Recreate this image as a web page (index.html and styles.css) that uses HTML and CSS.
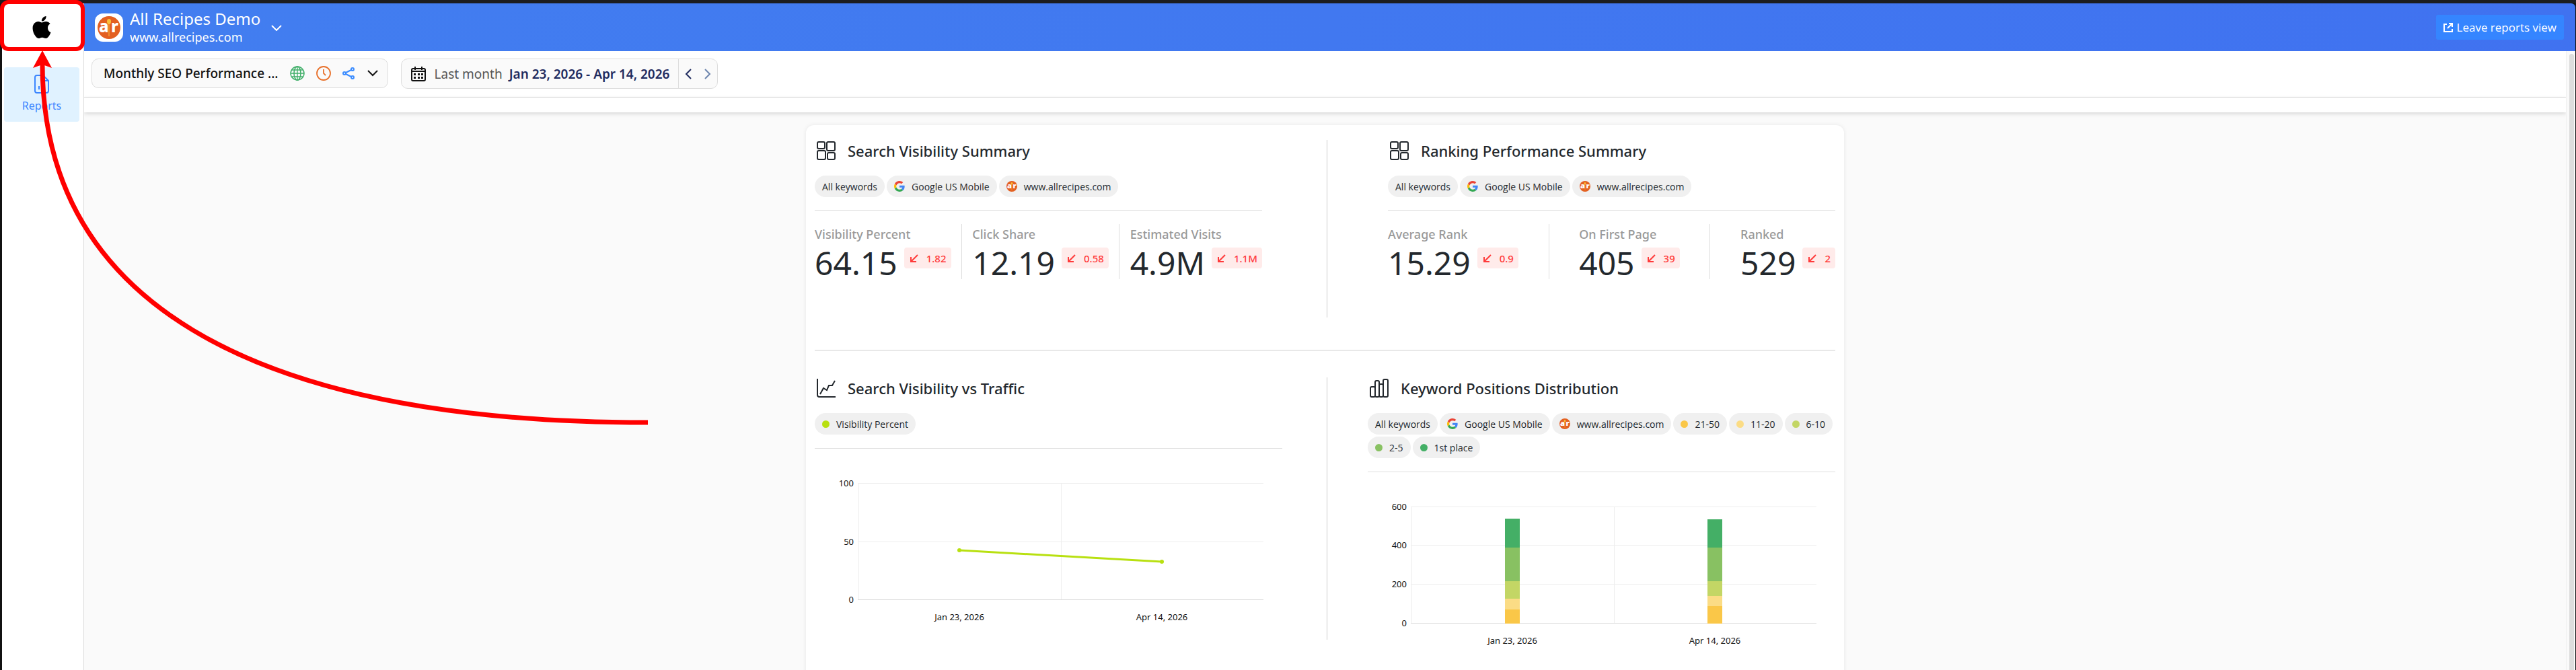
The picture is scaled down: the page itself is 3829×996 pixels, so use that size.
FILE: index.html
```html
<!DOCTYPE html>
<html lang="en">
<head>
  <meta charset="UTF-8" />
  <meta name="viewport" content="width=device-width, initial-scale=1.0"/>
  <title>All Recipes Demo - Reports</title>
  <link rel="stylesheet" href="styles.css">
</head>
<body>
  <!-- shared icons -->
  <svg class="sprite" aria-hidden="true">
    <symbol id="google" viewBox="0 0 48 48">
      <path fill="#ea4335" d="M24 9.5c3.5 0 6.7 1.2 9.2 3.6l6.9-6.9C35.9 2.4 30.5 0 24 0 14.6 0 6.5 5.4 2.6 13.2l8 6.2C12.4 13.7 17.7 9.5 24 9.5z"/>
      <path fill="#4285f4" d="M47 24.6c0-1.6-.2-3.1-.4-4.6H24v9h12.9c-.6 3-2.2 5.5-4.8 7.2l7.7 6C44.4 38 47 31.8 47 24.6z"/>
      <path fill="#fbbc05" d="M10.5 28.6c-.5-1.5-.8-3-.8-4.6s.3-3.1.8-4.6l-8-6.2C.9 16.5 0 20.1 0 24s.9 7.5 2.6 10.8l7.9-6.2z"/>
      <path fill="#34a853" d="M24 48c6.5 0 11.9-2.1 15.9-5.8l-7.7-6c-2.2 1.5-4.9 2.3-8.2 2.3-6.3 0-11.6-4.2-13.5-9.900l-8 6.200C6.500 42.600 14.600 48 24 48z"/>
    </symbol>
    <symbol id="allrecipes" viewBox="0 0 34 34">
      <circle cx="17" cy="17" r="17" fill="#e35f20"/>
      <text class="ar" x="2" y="24">a</text>
      <text class="ar" x="20" y="24">r</text>
      <ellipse cx="17" cy="8" rx="3" ry="4" fill="#f9bf3b"/>
      <path d="M17 8v22" stroke="#f9bf3b" stroke-width="1"/>
    </symbol>
    <symbol id="tiles" viewBox="0 0 28 28">
      <g fill="none" stroke="#23282d" stroke-width="2">
        <rect x="1" y="1" width="11" height="10" rx="2"/>
        <rect x="15" y="1" width="12" height="13" rx="2"/>
        <rect x="1" y="14" width="12" height="13" rx="2"/>
        <rect x="16" y="17" width="11" height="10" rx="2"/>
      </g>
    </symbol>
    <symbol id="down" viewBox="0 0 12 12">
      <path d="M11 1L2 10M1 4v7h8" fill="none" stroke="#ff3b3b" stroke-width="2"/>
    </symbol>
  </svg>

  <div class="app">
    <aside class="sidebar">
      <a href="#" class="brand" aria-label="Home">
        <svg width="28" height="33" viewBox="0 0 814 1000"><path d="M788 341c-6 4-108 62-108 190 0 148 130 201 134 202-1 3-21 72-69 142-42 62-87 123-155 123s-85-39-163-39c-76 0-103 41-165 41s-105-57-155-127C49 791 0 664 0 542c0-194 127-297 251-297 66 0 121 43 162 43 40 0 101-46 176-46 29 0 131 3 199 99zM554 159c31-37 53-88 53-139 0-7-1-14-2-20-50 2-110 34-147 76-28 32-55 83-55 135 0 8 1 16 2 18 3 1 8 1 13 1 46 0 103-30 136-71z"/></svg>
      </a>
      <a href="#" class="nav-item">
        <svg width="22" height="28" viewBox="0 0 22 28" fill="none" stroke="#3b86ff" stroke-width="2"><path d="M13 1H4a3 3 0 0 0-3 3v20a3 3 0 0 0 3 3h14a3 3 0 0 0 3-3V9zM13 1v8h8M7 22v-5M11 22v-3M15 22v-8"/></svg>
        <span>Reports</span>
      </a>
    </aside>

    <div class="main">
      <header class="topbar">
        <div class="site-logo"><svg width="34" height="34"><use href="#allrecipes"/></svg></div>
        <div class="site">
          <div class="site-name">All Recipes Demo</div>
          <div class="site-url">www.allrecipes.com</div>
        </div>
        <button class="icon-btn" aria-label="Switch site">
          <svg width="16" height="9" viewBox="0 0 16 9" fill="none" stroke="#fff" stroke-width="2"><path d="M1 1l7 7 7-7"/></svg>
        </button>
        <button class="leave">
          <svg width="14" height="14" viewBox="0 0 14 14" fill="none" stroke="#fff" stroke-width="2"><path d="M5 2H1v11h12V9M8 1h5v5M13 1L6 8"/></svg>
          Leave reports view
        </button>
      </header>

      <div class="scroller">
        <div class="page">
          <div class="toolbar">
            <button class="picker report-picker">
              <span class="report-name">Monthly SEO Performance ...</span>
              <svg width="22" height="22" viewBox="0 0 22 22" fill="none" stroke="#3fae68"><circle cx="11" cy="11" r="10" stroke-width="1.5"/><ellipse cx="11" cy="11" rx="5" ry="10" stroke-width="1.5"/><path d="M11 1v20M1 11h20M3 6h16M3 16h16" stroke-width="1.3"/></svg>
              <svg width="22" height="22" viewBox="0 0 22 22" fill="none" stroke="#e8702a" stroke-width="1.8"><circle cx="11" cy="11" r="10"/><path d="M11 5v6l3 3"/></svg>
              <svg width="18" height="20" viewBox="0 0 18 20" fill="none" stroke="#3b8cff" stroke-width="2"><circle cx="3" cy="10" r="2"/><circle cx="15" cy="4" r="2"/><circle cx="15" cy="16" r="2"/><path d="M5 9l8-4M5 11l8 4"/></svg>
              <svg class="caret" width="16" height="10" viewBox="0 0 16 10" fill="none" stroke="#111" stroke-width="2"><path d="M1 1l7 7 7-7"/></svg>
            </button>
            <div class="picker date-picker">
              <button class="range">
                <svg width="22" height="22" viewBox="0 0 22 22"><path d="M1 8V5a2 2 0 0 1 2-2h16a2 2 0 0 1 2 2v14a2 2 0 0 1-2 2H3a2 2 0 0 1-2-2zM1 7h20M6 0v5M16 0v5" fill="none" stroke="#111" stroke-width="2"/><path d="M4 10h3v3H4zM10 10h3v3h-3zM15 10h3v3h-3zM4 15h3v3H4zM10 15h3v3h-3zM15 15h3v3h-3z" fill="#111"/></svg>
                <span class="preset">Last month</span>
                <span class="dates">Jan 23, 2026 - Apr 14, 2026</span>
              </button>
              <button class="step first" aria-label="Previous period">
                <svg width="10" height="16" viewBox="0 0 10 16" fill="none" stroke="#1e2a5e" stroke-width="2"><path d="M9 1L2 8l7 7"/></svg>
              </button>
              <button class="step" aria-label="Next period">
                <svg width="10" height="16" viewBox="0 0 10 16" fill="none" stroke="#6c84ad" stroke-width="2"><path d="M1 1l7 7-7 7"/></svg>
              </button>
            </div>
          </div>
          <div class="subbar"></div>

          <main class="report">
            <div class="row">
              <section class="panel">
                <h2><svg width="28" height="28"><use href="#tiles"/></svg>Search Visibility Summary</h2>
                <div class="chips">
                  <span class="chip">All keywords</span>
                  <span class="chip"><svg width="16" height="16"><use href="#google"/></svg>Google US Mobile</span>
                  <span class="chip"><svg width="16" height="16"><use href="#allrecipes"/></svg>www.allrecipes.com</span>
                </div>
                <div class="metrics">
                  <div class="metric">
                    <div class="label">Visibility Percent</div>
                    <div class="value">64.15 <span class="change"><svg width="12" height="12"><use href="#down"/></svg>1.82</span></div>
                  </div>
                  <div class="bar"></div>
                  <div class="metric">
                    <div class="label">Click Share</div>
                    <div class="value">12.19 <span class="change"><svg width="12" height="12"><use href="#down"/></svg>0.58</span></div>
                  </div>
                  <div class="bar"></div>
                  <div class="metric">
                    <div class="label">Estimated Visits</div>
                    <div class="value">4.9M <span class="change"><svg width="12" height="12"><use href="#down"/></svg>1.1M</span></div>
                  </div>
                </div>
              </section>
              <section class="panel">
                <h2><svg width="28" height="28"><use href="#tiles"/></svg>Ranking Performance Summary</h2>
                <div class="chips">
                  <span class="chip">All keywords</span>
                  <span class="chip"><svg width="16" height="16"><use href="#google"/></svg>Google US Mobile</span>
                  <span class="chip"><svg width="16" height="16"><use href="#allrecipes"/></svg>www.allrecipes.com</span>
                </div>
                <div class="metrics">
                  <div class="metric">
                    <div class="label">Average Rank</div>
                    <div class="value">15.29 <span class="change"><svg width="12" height="12"><use href="#down"/></svg>0.9</span></div>
                  </div>
                  <div class="bar"></div>
                  <div class="metric">
                    <div class="label">On First Page</div>
                    <div class="value">405 <span class="change"><svg width="12" height="12"><use href="#down"/></svg>39</span></div>
                  </div>
                  <div class="bar"></div>
                  <div class="metric">
                    <div class="label">Ranked</div>
                    <div class="value">529 <span class="change"><svg width="12" height="12"><use href="#down"/></svg>2</span></div>
                  </div>
                </div>
              </section>
            </div>

            <div class="row charts">
              <section class="panel">
                <h2><svg width="28" height="28" viewBox="0 0 28 28" fill="none" stroke="#23282d" stroke-width="2"><path d="M1 0v24a3 3 0 0 0 3 3h24M5 23l5-9 5 3 3-7h5l4-7"/></svg>Search Visibility vs Traffic</h2>
                <div class="chips">
                  <span class="chip"><i class="dot lime"></i>Visibility Percent</span>
                </div>
                <svg class="chart" viewBox="0 0 695 240">
                  <path class="grid" d="M64 22h603M64 109h603M65 22v173M366 22v173"/>
                  <path class="axis" d="M64 195h603"/>
                  <g class="y">
                    <text x="58" y="27">100</text>
                    <text x="58" y="114">50</text>
                    <text x="58" y="200">0</text>
                  </g>
                  <g class="x">
                    <text x="215" y="226">Jan 23, 2026</text>
                    <text x="516" y="226">Apr 14, 2026</text>
                  </g>
                  <path d="M215 122L516 139" stroke="#b8e010" stroke-width="3"/>
                  <circle cx="215" cy="122" r="3" fill="#b8e010"/>
                  <circle cx="516" cy="139" r="3" fill="#b8e010"/>
                </svg>
              </section>
              <section class="panel">
                <h2><svg width="28" height="28" viewBox="0 0 28 28" fill="none" stroke="#23282d" stroke-width="2"><rect x="1" y="12" width="7" height="15" rx="2"/><rect x="8" y="3" width="6" height="24" rx="2"/><rect x="14" y="8" width="6" height="19" rx="2"/><rect x="20" y="1" width="7" height="26" rx="2"/></svg>Keyword Positions Distribution</h2>
                <div class="chips">
                  <span class="chip">All keywords</span>
                  <span class="chip"><svg width="16" height="16"><use href="#google"/></svg>Google US Mobile</span>
                  <span class="chip"><svg width="16" height="16"><use href="#allrecipes"/></svg>www.allrecipes.com</span>
                  <span class="chip"><i class="dot orange"></i>21-50</span>
                  <span class="chip"><i class="dot yellow"></i>11-20</span>
                  <span class="chip"><i class="dot olive"></i>6-10</span>
                  <span class="chip"><i class="dot green"></i>2-5</span>
                  <span class="chip"><i class="dot dark"></i>1st place</span>
                </div>
                <svg class="chart" viewBox="0 0 695 240">
                  <path class="grid" d="M64 22h603M64 79h603M64 137h603M65 22v173M366 22v173"/>
                  <path class="axis" d="M64 195h603"/>
                  <g class="y">
                    <text x="58" y="27">600</text>
                    <text x="58" y="84">400</text>
                    <text x="58" y="142">200</text>
                    <text x="58" y="200">0</text>
                  </g>
                  <g class="x">
                    <text x="215" y="226">Jan 23, 2026</text>
                    <text x="516" y="226">Apr 14, 2026</text>
                  </g>
                  <g fill="#44af66"><rect x="204" y="40" width="22" height="43"/><rect x="505" y="41" width="22" height="42"/></g>
                  <g fill="#88c162"><rect x="204" y="83" width="22" height="50"/><rect x="505" y="83" width="22" height="50"/></g>
                  <g fill="#c3d665"><rect x="204" y="133" width="22" height="26"/><rect x="505" y="133" width="22" height="22"/></g>
                  <g fill="#fbdc85"><rect x="204" y="159" width="22" height="16"/><rect x="505" y="155" width="22" height="15"/></g>
                  <g fill="#fac748"><rect x="204" y="175" width="22" height="21"/><rect x="505" y="170" width="22" height="26"/></g>
                </svg>
              </section>
            </div>
          </main>
        </div>
        <div class="scrollbar"><div class="thumb"></div></div>
      </div>
    </div>
  </div>

  <!-- callout pointing at the brand logo -->
  <svg class="callout" width="980" height="640" aria-hidden="true">
    <rect x="3" y="3" width="120" height="70" rx="10" fill="none" stroke="#f00" stroke-width="6"/>
    <path d="M63 95C63 440 360 628 963 628" fill="none" stroke="#f00" stroke-width="7"/>
    <path d="M63 75l14 26-14-5-14 5z" fill="#f00"/>
  </svg>
</body>
</html>
```
FILE: styles.css
```css
* {
  box-sizing: border-box;
}

body {
  margin: 0;
  font-family: 'Noto Sans', 'Open Sans', sans-serif;
  font-size: 16px;
  color: #23282d;
  background-color: #111;
}

button {
  font-family: inherit;
  border: none;
  background: none;
  padding: 0;
  cursor: pointer;
}

a {
  text-decoration: none;
}

.sprite {
  display: none;
}

.ar {
  font-size: 24px;
  font-weight: 800;
  fill: #fff;
}

.app {
  display: flex;
  height: 100vh;
  padding-left: 3px;
  padding-right: 1px;
  border-top: 5px solid #1c1d20;
  overflow: hidden;
}

/* sidebar */
.sidebar {
  width: 122px;
  flex-shrink: 0;
  background-color: #fff;
  border-right: 1px solid #ddd;
}

.brand {
  display: flex;
  align-items: center;
  justify-content: center;
  height: 71px;
  padding-right: 4px;
}

.nav-item {
  display: flex;
  flex-direction: column;
  align-items: center;
  gap: 6px;
  height: 81px;
  margin: 24px 6px 0 3px;
  padding-top: 11px;
  border-radius: 4px;
  background-color: #e0f2ff;
  color: #3b86ff;
  line-height: 24px;
}

/* header */
.main {
  flex: 1;
  min-width: 0;
  display: flex;
  flex-direction: column;
}

.topbar {
  display: flex;
  align-items: center;
  height: 71px;
  flex-shrink: 0;
  padding: 0 17px 0 16px;
  background: linear-gradient(90deg, #427ef0, #4072f0);
  border-top-right-radius: 6px;
  color: #fff;
}

.site-logo {
  display: flex;
  align-items: center;
  justify-content: center;
  width: 42px;
  height: 42px;
  margin-right: 10px;
  border-radius: 12px;
  background-color: #fff;
}

.site {
  padding-bottom: 1px;
}

.site-name {
  font-size: 24px;
  line-height: 30px;
}

.site-url {
  font-size: 18px;
  line-height: 24px;
}

.icon-btn {
  margin-left: 16px;
}

.leave {
  display: flex;
  align-items: center;
  gap: 6px;
  height: 37px;
  margin-left: auto;
  padding: 0 11px;
  border-radius: 3px;
  background-color: #3585ff;
  color: #fff;
  font-family: 'Open Sans', sans-serif;
  font-size: 17px;
}

/* page */
.scroller {
  flex: 1;
  min-height: 0;
  display: flex;
  background-color: #fafafa;
}

.page {
  flex: 1;
  overflow: hidden;
}

.scrollbar {
  width: 14px;
  padding: 4px 2px 0 4px;
  border-left: 1px solid #eee;
}

.thumb {
  height: 100%;
  border-radius: 4px 4px 0 0;
  background-color: #ddd;
}

.toolbar {
  display: flex;
  align-items: flex-start;
  gap: 19px;
  height: 69px;
  padding: 11px;
  background-color: #fff;
  border-bottom: 1px solid #ddd;
}

.subbar {
  height: 22px;
  background-color: #fff;
  box-shadow: 0 2px 6px rgba(0, 0, 0, 0.15);
}

.picker {
  display: flex;
  align-items: center;
  height: 45px;
  border: 1px solid #ddd;
  border-radius: 10px;
  background-color: #fafafa;
}

.report-picker {
  gap: 17px;
  height: 44px;
  padding: 0 14px 0 17px;
  font-size: 19px;
  font-weight: 500;
  color: #111;
}

.caret {
  margin-left: 2px;
}

.date-picker {
  font-size: 19px;
}

.range {
  display: flex;
  align-items: center;
  padding: 0 13px 0 14px;
  font-size: inherit;
}

.preset {
  margin: 0 10px 0 13px;
  color: #555;
}

.dates {
  font-weight: 600;
  color: #1e2a5e;
}

.step {
  display: flex;
  align-items: center;
  justify-content: center;
  width: 29px;
  height: 100%;
}

.step.first {
  border-left: 1px solid #ddd;
}

/* report */
.report {
  width: 1543px;
  max-width: 100%;
  margin: 19px auto 0;
  padding: 0 13px;
  border-radius: 12px;
  background-color: #fff;
  box-shadow: 0 0 6px rgba(0, 0, 0, 0.08);
}

.row {
  display: flex;
  justify-content: space-between;
  position: relative;
  height: 335px;
  padding-top: 22px;
  border-bottom: 1px solid #ccc;
}

/* rule between the two panels */
.row::before {
  content: "";
  position: absolute;
  left: 50%;
  top: 22px;
  bottom: 48px;
  margin-left: 2px;
  width: 1px;
  background-color: #ccc;
}

.row.charts {
  height: 520px;
  padding-top: 40px;
  border-bottom: none;
}

.row.charts::before {
  top: 40px;
  bottom: 90px;
}

.panel {
  width: 665px;
}

.charts .panel {
  width: 695px;
}

h2 {
  display: flex;
  align-items: center;
  gap: 18px;
  height: 32px;
  margin: 0 0 21px;
  padding-left: 3px;
  font-size: 22px;
  font-weight: 500;
}

.chips {
  display: flex;
  flex-wrap: wrap;
  gap: 3px;
  padding-bottom: 19px;
  border-bottom: 1px solid #ddd;
}

.charts .chips {
  padding-bottom: 20px;
}

.chip {
  display: flex;
  align-items: center;
  gap: 10px;
  height: 32px;
  padding: 0 11px;
  border-radius: 16px;
  background-color: #f0f0f0;
  font-family: 'Open Sans', sans-serif;
  font-size: 14px;
}

.dot {
  width: 11px;
  height: 11px;
  border-radius: 50%;
}

.lime { background-color: #b8e010; }
.orange { background-color: #fac748; }
.yellow { background-color: #fbdc85; }
.olive { background-color: #c3d665; }
.green { background-color: #88c162; }
.dark { background-color: #44af66; }

.metrics {
  display: flex;
  justify-content: space-between;
  margin-top: 20px;
}

.metric {
  padding-top: 3px;
}

.bar {
  width: 1px;
  height: 82px;
  background-color: #ddd;
}

.label {
  font-size: 18px;
  font-weight: 500;
  line-height: 24px;
  color: #999;
}

.value {
  display: flex;
  align-items: flex-start;
  gap: 10px;
  font-size: 48px;
  line-height: 62px;
}

.change {
  display: flex;
  align-items: center;
  gap: 12px;
  height: 31px;
  margin-top: 8px;
  padding: 0 7px 0 9px;
  border-radius: 4px;
  background-color: #ffebea;
  color: #ff3b3b;
  font-size: 15px;
  font-weight: 500;
}

/* charts */
.chart {
  display: block;
  width: 100%;
  margin-top: 29px;
  font-size: 13px;
}

.chart text {
  fill: #111;
}

.grid {
  fill: none;
  stroke: #eee;
  shape-rendering: crispEdges;
}

.axis {
  stroke: #ddd;
  shape-rendering: crispEdges;
}

.y text {
  text-anchor: end;
}

.x text {
  text-anchor: middle;
}

.callout {
  position: absolute;
  left: 0;
  top: 0;
  pointer-events: none;
}
```
